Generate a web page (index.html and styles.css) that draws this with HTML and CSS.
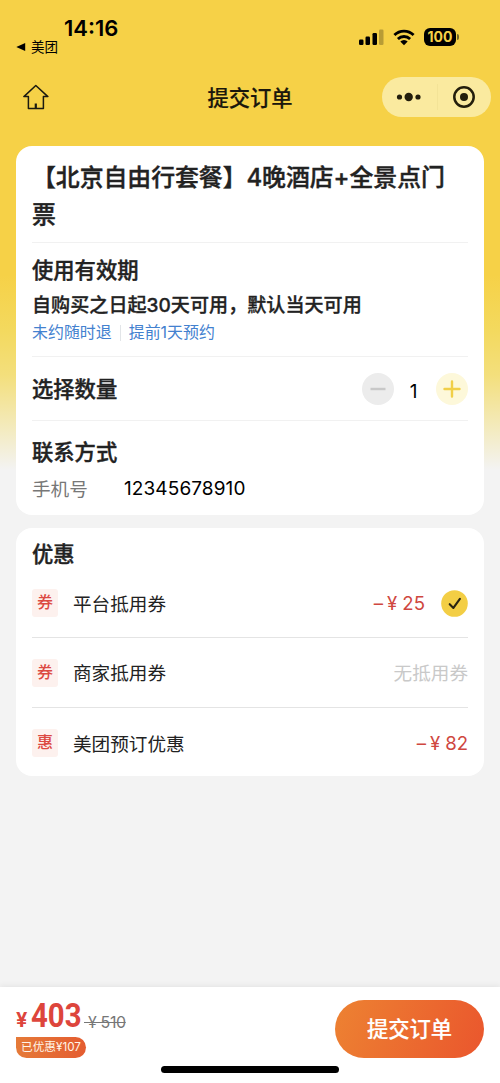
FILE: index.html
```html
<!DOCTYPE html>
<html lang="zh-CN">
<head>
<meta charset="utf-8">
<title>提交订单</title>
<link rel="stylesheet" href="styles.css">
</head>
<body>
<div class="page">
  <div class="status">
    <div class="clock">
      <div class="time">14:16</div>
      <div class="back"><svg width="10" height="10" viewBox="0 0 10 10"><path d="M.3 5 9.2.9v8.2z"/></svg><span>美团</span></div>
    </div>
    <div class="signals">
      <svg width="26" height="18" viewBox="0 0 26 18"><rect x="0" y="11.500" width="4.500" height="5.500" rx="1.200"/><rect x="6.500" y="8.500" width="4.500" height="8.500" rx="1.200"/><rect x="13.500" y="5" width="4.500" height="12" rx="1.200"/><rect x="20" y="1.500" width="4.500" height="15.500" rx="1.200" opacity=".25"/></svg>
      <svg class="wifi" width="22" height="17" viewBox="0 0 22 17"><g fill="none" stroke="#000" stroke-width="2.800"><path d="M1.400 6.100a13.700 13.700 0 0 1 19.200 0"/><path d="M4.900 10a8.700 8.700 0 0 1 12.200 0"/></g><path d="M7.300 12.400a5.300 5.300 0 0 1 7.400 0L11 16.300z"/></svg>
      <div class="battery">100</div><i class="tip"></i>
    </div>
  </div>
  <header class="nav">
    <svg class="home" width="26" height="26" viewBox="0 0 26 26" fill="none" stroke="#1c1a10" stroke-width="1.500" stroke-linejoin="round"><path d="M12.800 1.500.9 12.600h4.500v11.900h15V12.600h4.500z"/><path d="M12.800 19.500v5" stroke-width="2.200"/></svg>
    <h1>提交订单</h1>
    <div class="capsule">
      <svg width="26" height="12" viewBox="0 0 26 12"><circle cx="3.500" cy="6" r="2.600"/><circle cx="12.700" cy="6" r="4.200"/><circle cx="22" cy="6" r="2.600"/></svg>
      <i></i>
      <svg width="24" height="24" viewBox="0 0 24 24"><circle cx="12" cy="12" r="9.700" fill="none" stroke="#231e0c" stroke-width="2.500"/><circle cx="12" cy="12" r="4"/></svg>
    </div>
  </header>
  <main>
    <section class="card order">
      <h2 class="product">【北京自由行套餐】4晚酒店+全景点门票</h2>
      <div class="validity">
        <h3>使用有效期</h3>
        <p class="period">自购买之日起30天可用，默认当天可用</p>
        <p class="rules"><span>未约随时退</span><i></i><span>提前1天预约</span></p>
      </div>
      <div class="quantity">
        <h3>选择数量</h3>
        <div class="stepper">
          <svg width="32" height="32" viewBox="0 0 32 32"><circle cx="16" cy="16" r="16" fill="#ececec"/><path d="M8.500 16h15" stroke="#c8c8c8" stroke-width="2.400"/></svg>
          <span>1</span>
          <svg width="32" height="32" viewBox="0 0 32 32"><circle cx="16" cy="16" r="16" fill="#fdf8da"/><path d="M8.500 16h15M16 8.500v15" stroke="#f1cf48" stroke-width="2.400" stroke-linecap="round"/></svg>
        </div>
      </div>
      <div class="contact">
        <h3>联系方式</h3>
        <div class="phone"><span class="label">手机号</span><span class="number">12345678910</span></div>
      </div>
    </section>
    <section class="card discounts">
      <h3>优惠</h3>
      <div class="row first"><b>券</b><span class="name">平台抵用券</span><em><span class="minus">–</span><span class="yen">¥</span>25</em>
        <svg width="27" height="27" viewBox="0 0 27 27"><circle cx="13.500" cy="13.500" r="13.300" fill="#f3ce45"/><path d="m8.700 14.200 3.700 3.700 6.500-9" fill="none" stroke="#2a2410" stroke-width="2.100" stroke-linecap="round" stroke-linejoin="round"/></svg></div>
      <div class="row"><b>券</b><span class="name">商家抵用券</span><em class="none">无抵用券</em></div>
      <div class="row last"><b>惠</b><span class="name">美团预订优惠</span><em><span class="minus">–</span><span class="yen">¥</span>82</em></div>
    </section>
  </main>
  <footer>
    <div class="checkout">
      <div class="total">
        <div class="prices"><span class="sign">¥</span><strong>403</strong><s>&nbsp;¥ 510</s></div>
        <div class="saved">已优惠¥107</div>
      </div>
      <button>提交订单</button>
    </div>
    <div class="indicator"></div>
  </footer>
</div>
</body>
</html>
```
FILE: styles.css
```css
* { box-sizing: border-box; margin: 0; padding: 0; }
body { font-family: Inter, "Noto Sans CJK SC", sans-serif; color: #222; }
i, em { font-style: normal; }
svg { display: block; flex: none; }
.page { height: 1083px; display: flex; flex-direction: column; overflow: hidden; background: linear-gradient(#f6d147 0, #f6d147 275px, #f3d95e 330px, #f3df7c 375px, #f3ebc0 430px, #f3f3f3 470px); }
.status { height: 77px; display: flex; justify-content: space-between; padding: 16px 41px 0 16px; color: #000; }
.time { font-size: 22px; line-height: 24px; font-weight: 600; padding-left: 48px; }
.back { display: flex; align-items: center; gap: 5px; font-size: 13.500px; line-height: 14px; }
.signals { display: flex; height: 20px; margin-top: 11px; align-items: center; }
.wifi { margin: 0 9px 0 8px; }
.battery { width: 32px; height: 18px; border-radius: 6px; background: #000; color: #f6d147; font-size: 14px; font-weight: 700; line-height: 18px; text-align: center; }
.tip { width: 2px; height: 6px; border-radius: 0 2px 2px 0; margin-left: 1px; background: #74652a; }
.nav { height: 40px; display: grid; grid-template-columns: 109px 1fr 109px; align-items: center; padding: 0 9px; }
.home { margin-left: 14px; }
.nav h1 { height: 40px; font-size: 21.300px; font-weight: 500; line-height: 42px; text-align: center; color: #1a170c; white-space: nowrap; -webkit-text-stroke: .2px; }
.capsule { height: 40px; border-radius: 20px; background: #faea9f; display: flex; align-items: center; padding: 0 15px 0 14px; justify-content: space-between; fill: #231e0c; }
.capsule i { width: 1px; height: 26px; background: #f3e397; }
main { padding: 29px 16px 0; flex: 1; }
.card { background: #fff; border-radius: 16px; padding: 0 16px; }
.order { height: 369px; margin-bottom: 13px; }
.product { height: 97px; padding-top: 13px; font-size: 23.900px; line-height: 37px; font-weight: 500; letter-spacing: -.06px; border-bottom: 1px solid #f1f1f1; -webkit-text-stroke: .4px; }
h3 { font-size: 21.300px; line-height: 30px; font-weight: 500; -webkit-text-stroke: .4px; }
.validity { height: 114px; padding-top: 12px; border-bottom: 1px solid #f1f1f1; }
.period { font-size: 19.100px; font-weight: 500; line-height: 28px; margin-top: 6px; white-space: nowrap; -webkit-text-stroke: .3px; }
.rules { display: flex; align-items: center; color: #4381cf; font-size: 15.950px; line-height: 28px; }
.rules i { width: 1px; height: 16px; margin: 0 8px; background: #e2e5e8; }
.quantity { height: 64px; display: flex; align-items: center; justify-content: space-between; border-bottom: 1px solid #f1f1f1; }
.stepper { display: flex; align-items: center; color: #000; font-size: 19px; }
.stepper svg { margin-left: -1px; }
.stepper span { width: 43px; padding: 5px 4px 0 0; text-align: center; }
.contact { padding-top: 16px; }
.phone { display: flex; font-size: 18.600px; line-height: 28px; margin-top: 8px; color: #000; }
.label { width: 92px; color: #777; }
.number { font-size: 19px; letter-spacing: .1px; line-height: 28px; }
.discounts { height: 248px; padding-top: 11px; }
.row { height: 70px; display: flex; align-items: center; border-bottom: 1px solid #e4e4e4; font-size: 18.600px; }
.row.first { height: 69px; }
.row.last { border: 0; }
.row b { width: 26px; height: 28px; background: #fdf1ee; color: #dc4942; border-radius: 3px; font-size: 16px; line-height: 27px; font-weight: 500; text-align: center; margin-right: 15px; }
.name { padding-bottom: 2px; }
.row em { margin-left: auto; color: #cf4740; }
.row svg { margin-left: 16px; }
.minus { margin-right: 4px; }
.yen { margin-right: 5px; }
.row .none { color: #c9c9c9; padding-bottom: 2px; }
footer { height: 96px; background: #fff; padding: 13px 16px 0; box-shadow: 0 -1px 6px #00000012; }
.checkout { display: flex; justify-content: space-between; height: 58px; }
.prices { display: flex; align-items: baseline; height: 37px; line-height: 31px; color: #dd453c; white-space: nowrap; }
.sign { font-size: 20px; font-weight: 700; width: 15px; }
.prices strong { font-family: Roboto, sans-serif; width: 51px; font-size: 33px; font-weight: 700; transform: scaleX(.89); transform-origin: left; }
s { font-size: 16px; color: #777; margin-left: 2px; letter-spacing: -.4px; position: relative; top: 1px; }
.saved { width: 70px; height: 21px; border-radius: 0 11px 11px 11px; background: linear-gradient(90deg, #e57a38, #e45c30); color: #fff5e8; font-size: 11.700px; line-height: 21px; text-align: center; white-space: nowrap; }
button { width: 149px; border: 0; border-radius: 29px; background: linear-gradient(110deg, #ed8232, #ea562d); color: #fff; font: 500 21.300px/58px Inter, "Noto Sans CJK SC", sans-serif; -webkit-text-stroke: .2px; }
.indicator { width: 178px; height: 7px; border-radius: 4px; background: #000; margin: 8px auto 0; }
```
